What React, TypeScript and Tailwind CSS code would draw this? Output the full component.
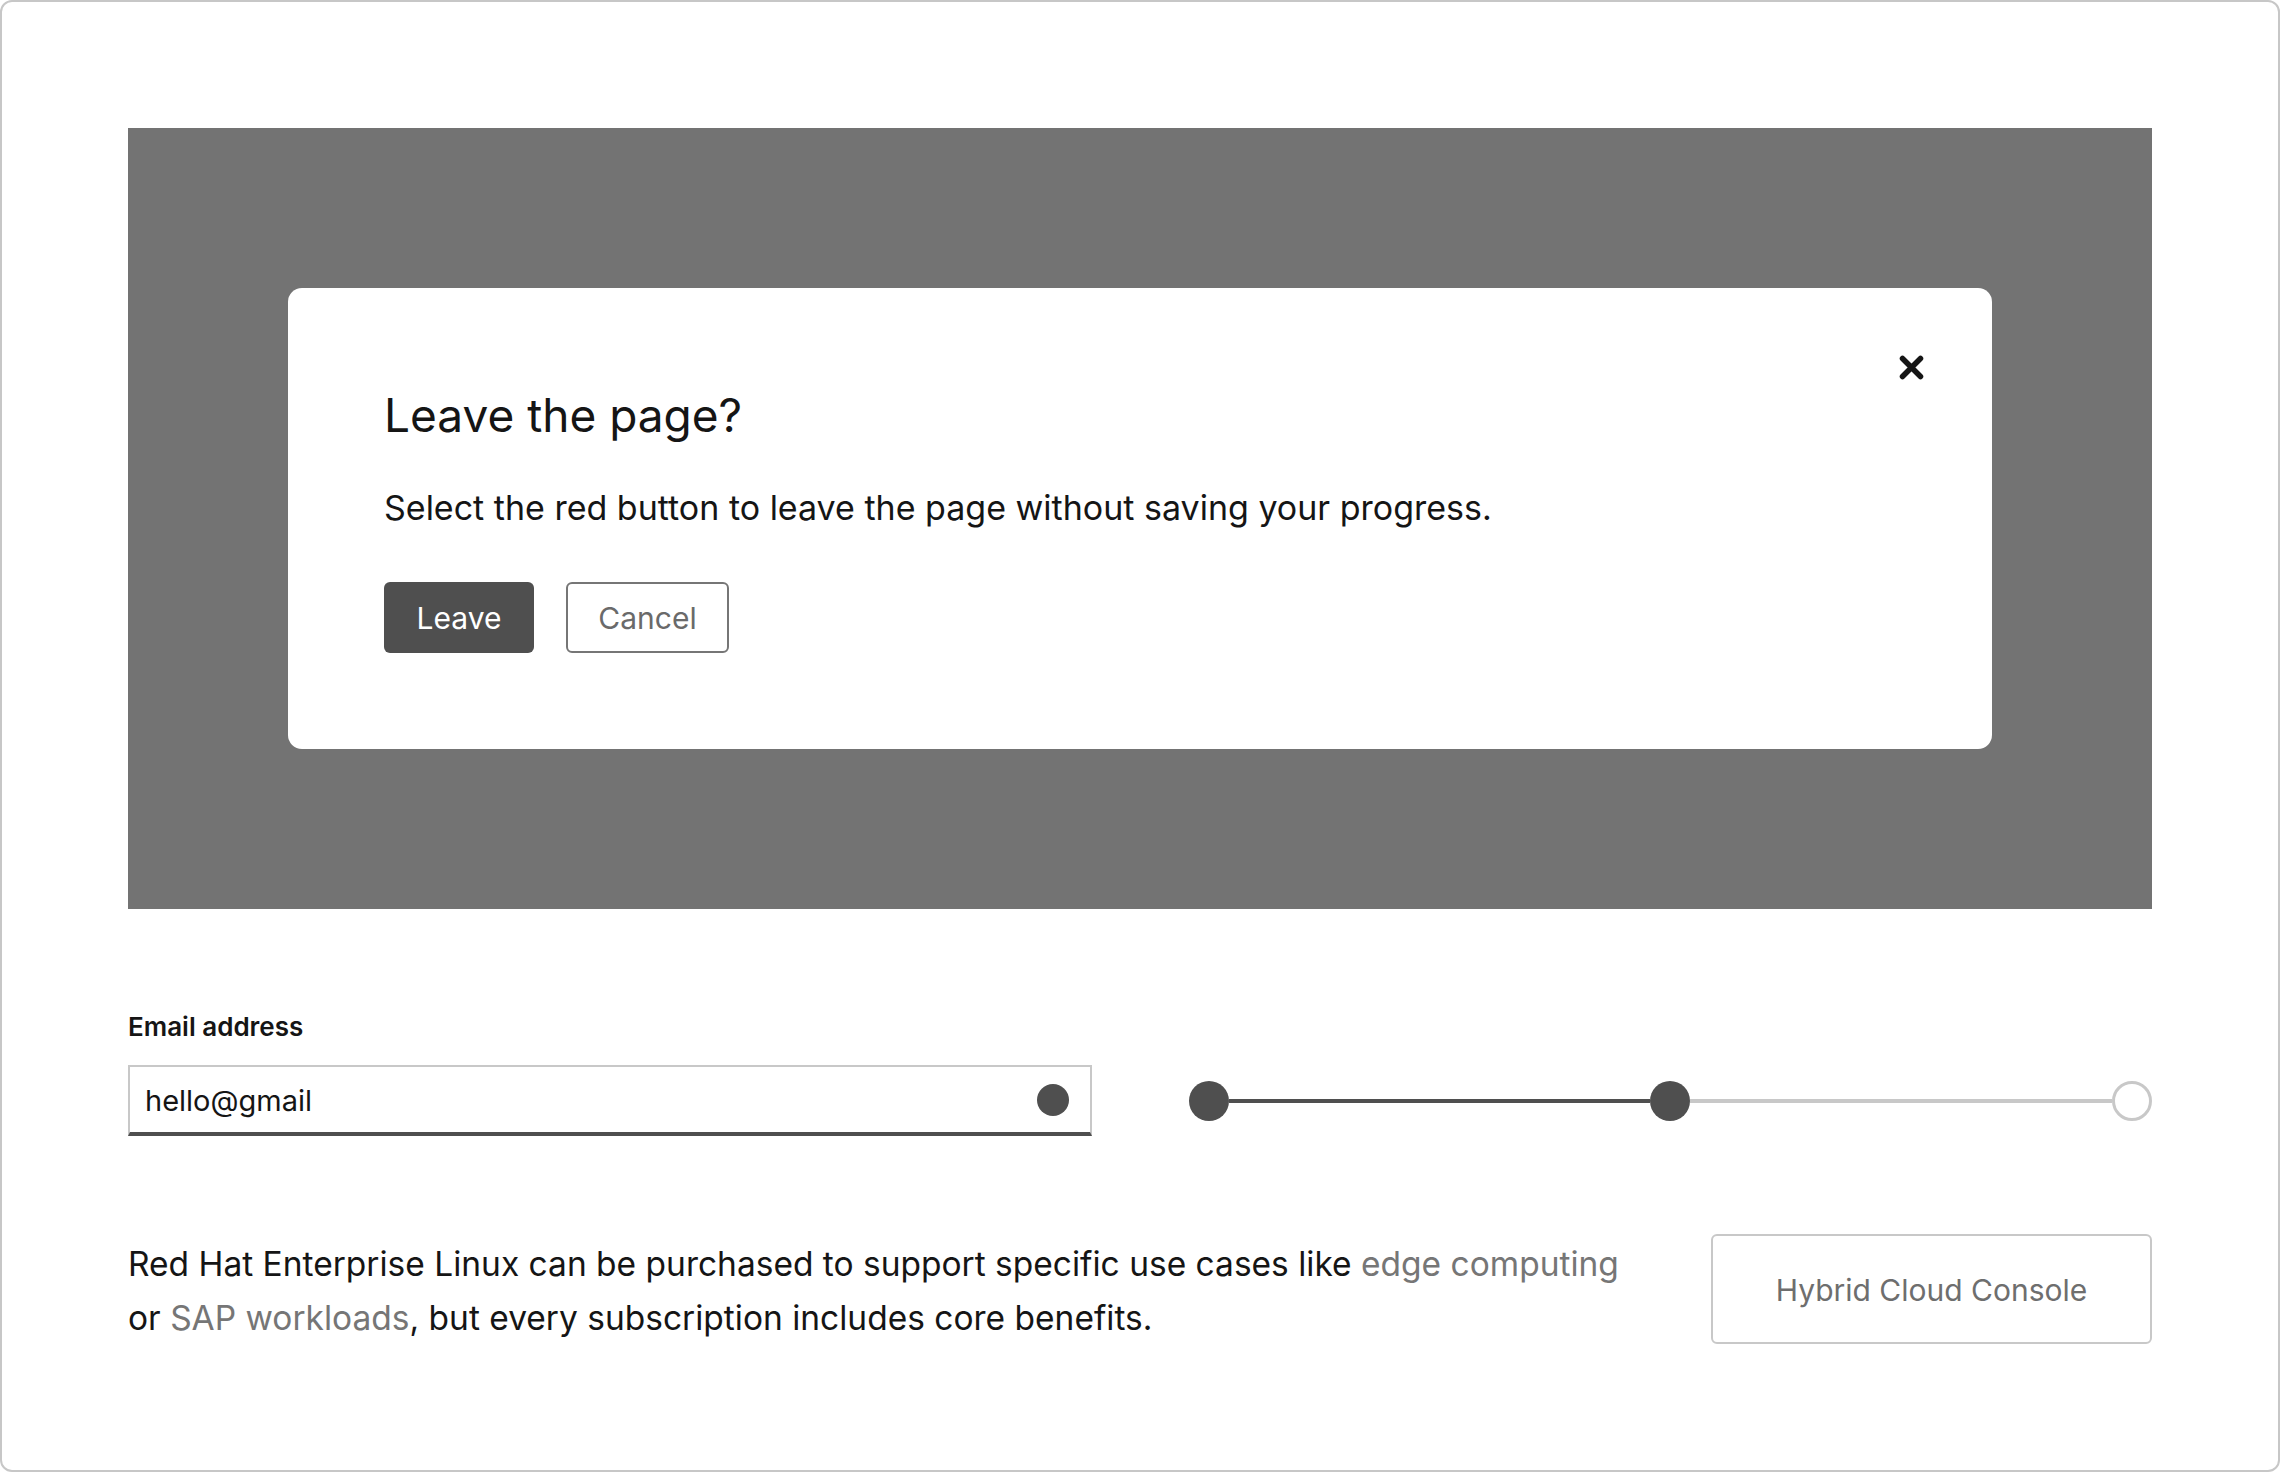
const font = { fontFamily: 'Inter, "Noto Sans", sans-serif' };

function CloseIcon() {
  return (
    <svg width="25" height="25" viewBox="0 0 25 25" aria-hidden="true">
      <path d="M3.5 3.5 L21.5 21.5 M21.5 3.5 L3.5 21.5" stroke="#151515" strokeWidth="5.5" strokeLinecap="round" />
    </svg>
  );
}

function Modal() {
  return (
    <div className="relative bg-white rounded-[14px] pt-[99px] pb-[96px] px-[96px]">
      <button className="absolute top-[67px] right-[68px] w-[25px] h-[25px] flex items-center justify-center">
        <CloseIcon />
      </button>
      <h2 className="text-[46px] leading-[56px] font-normal text-[#151515]">Leave the page?</h2>
      <p className="mt-[45px] text-[34px] leading-[40px] text-[#151515]">
        Select the red button to leave the page without saving your progress.
      </p>
      <div className="mt-[54px] flex gap-[32px]">
        <button className="h-[71px] w-[150px] rounded-[6px] bg-[#4f4f4f] text-white text-[30px] pt-[2px]">Leave</button>
        <button className="h-[71px] w-[163px] rounded-[6px] border-2 border-[#767676] bg-white text-[#6a6a6a] text-[30px] pt-[2px]">
          Cancel
        </button>
      </div>
    </div>
  );
}

function Slider() {
  return (
    <div className="flex items-center w-full">
      <div className="w-[40px] h-[40px] rounded-full bg-[#4f4f4f] shrink-0" />
      <div className="flex-1 h-[4px] bg-[#4f4f4f]" />
      <div className="w-[40px] h-[40px] rounded-full bg-[#4f4f4f] shrink-0" />
      <div className="flex-1 h-[4px] bg-[#c8c8c8]" />
      <div className="w-[40px] h-[40px] rounded-full border-[3px] border-[#c8c8c8] bg-white shrink-0" />
    </div>
  );
}

export default function App() {
  return (
    <div
      style={font}
      className="w-[2280px] h-[1472px] box-border border-2 border-[#c7c7c7] rounded-[12px] bg-white p-[126px] text-[#151515]"
    >
      {/* backdrop + dialog */}
      <div className="bg-[#737373] p-[160px]">
        <Modal />
      </div>

      {/* form row */}
      <div className="mt-[102px] grid grid-cols-2 gap-x-[97px] items-end">
        <div className="flex flex-col">
          <label className="text-[26px] leading-[32px] font-semibold text-[#151515]">Email address</label>
          <div className="mt-[22px] h-[71px] flex items-center border-2 border-b-4 border-[#c8c8c8] border-b-[#4f4f4f] pl-[15px] pr-[21px]">
            <span className="flex-1 text-[29px] text-[#151515] pt-[2px]">hello@gmail</span>
            <span className="w-[32px] h-[32px] rounded-full bg-[#4f4f4f]" />
          </div>
        </div>
        <div className="h-[71px] flex items-center">
          <Slider />
        </div>
      </div>

      {/* text + button row */}
      <div className="mt-[97px] flex items-center justify-between">
        <p className="text-[33.5px] leading-[54px] text-[#151515] pt-[4px]">
          Red Hat Enterprise Linux can be purchased to support specific use cases like{' '}
          <a className="text-[#767676]">edge computing</a>
          <br />
          or <a className="text-[#767676]">SAP workloads</a>, but every subscription includes core benefits.
        </p>
        <button className="w-[441px] h-[110px] shrink-0 rounded-[6px] border-2 border-[#c8c8c8] bg-white text-[30px] text-[#6e6e6e] pt-[2px]">
          Hybrid Cloud Console
        </button>
      </div>
    </div>
  );
}
